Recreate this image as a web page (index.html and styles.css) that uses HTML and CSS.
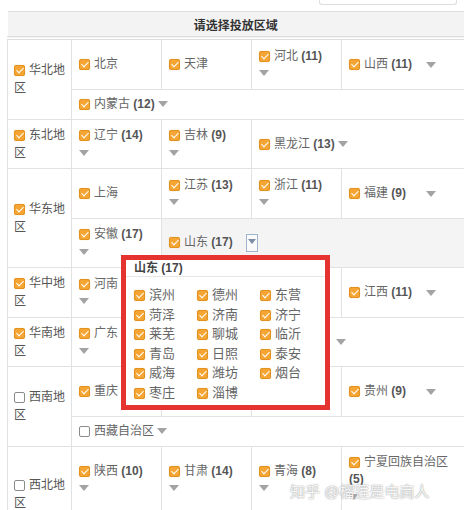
FILE: index.html
```html
<!DOCTYPE html>
<html lang="zh-CN">
<head>
    <meta charset="UTF-8">
    <meta name="viewport" content="width=device-width, initial-scale=1.0">
    <title>请选择投放区域</title>
    <link rel="stylesheet" href="styles.css">
</head>
<body>
    <div class="page">
        <div class="topbar"><div class="search-box"></div></div>

        <table class="area-table">
            <colgroup>
                <col class="col-region">
                <col class="col-prov">
                <col class="col-prov">
                <col class="col-prov">
                <col>
            </colgroup>
            <thead>
                <tr><th colspan="5">请选择投放区域</th></tr>
            </thead>
            <tbody>
                <!-- 华北 -->
                <tr>
                    <td class="region" rowspan="2"><i class="cb on"></i>华北地区</td>
                    <td><span class="prov"><i class="cb on"></i>北京</span></td>
                    <td><span class="prov"><i class="cb on"></i>天津</span></td>
                    <td><span class="prov"><i class="cb on"></i>河北 <b>(11)</b></span> <i class="arrow"></i></td>
                    <td><span class="prov"><i class="cb on"></i>山西 <b>(11)</b></span> <i class="arrow"></i></td>
                </tr>
                <tr class="short">
                    <td colspan="4"><span class="prov"><i class="cb on"></i>内蒙古 <b>(12)</b></span> <i class="arrow"></i></td>
                </tr>

                <!-- 东北 -->
                <tr>
                    <td class="region"><i class="cb on"></i>东北地区</td>
                    <td><span class="prov"><i class="cb on"></i>辽宁 <b>(14)</b></span> <i class="arrow"></i></td>
                    <td><span class="prov"><i class="cb on"></i>吉林 <b>(9)</b></span> <i class="arrow"></i></td>
                    <td colspan="2"><span class="prov"><i class="cb on"></i>黑龙江 <b>(13)</b></span> <i class="arrow"></i></td>
                </tr>

                <!-- 华东 -->
                <tr>
                    <td class="region" rowspan="2"><i class="cb on"></i>华东地区</td>
                    <td><span class="prov"><i class="cb on"></i>上海</span></td>
                    <td><span class="prov"><i class="cb on"></i>江苏 <b>(13)</b></span> <i class="arrow"></i></td>
                    <td><span class="prov"><i class="cb on"></i>浙江 <b>(11)</b></span> <i class="arrow"></i></td>
                    <td><span class="prov"><i class="cb on"></i>福建 <b>(9)</b></span> <i class="arrow"></i></td>
                </tr>
                <tr>
                    <td><span class="prov"><i class="cb on"></i>安徽 <b>(17)</b></span> <i class="arrow"></i></td>
                    <td colspan="3" class="active"><span class="prov"><i class="cb on"></i>山东 <b>(17)</b></span> <span class="drop-btn"><i class="arrow"></i></span></td>
                </tr>

                <!-- 华中 -->
                <tr>
                    <td class="region"><i class="cb on"></i>华中地区</td>
                    <td><span class="prov"><i class="cb on"></i>河南 <b>(17)</b></span> <i class="arrow"></i></td>
                    <td><span class="prov"><i class="cb on"></i>湖北 <b>(16)</b></span> <i class="arrow"></i></td>
                    <td><span class="prov"><i class="cb on"></i>湖南 <b>(14)</b></span> <i class="arrow"></i></td>
                    <td><span class="prov"><i class="cb on"></i>江西 <b>(11)</b></span> <i class="arrow"></i></td>
                </tr>

                <!-- 华南 -->
                <tr>
                    <td class="region"><i class="cb on"></i>华南地区</td>
                    <td><span class="prov"><i class="cb on"></i>广东 <b>(21)</b></span> <i class="arrow"></i></td>
                    <td><span class="prov"><i class="cb on"></i>广西 <b>(14)</b></span> <i class="arrow"></i></td>
                    <td colspan="2"><span class="prov"><i class="cb on"></i>海南 <b>(4)</b></span> <i class="arrow"></i></td>
                </tr>

                <!-- 西南 -->
                <tr>
                    <td class="region" rowspan="2"><i class="cb"></i>西南地区</td>
                    <td><span class="prov"><i class="cb on"></i>重庆</span></td>
                    <td><span class="prov"><i class="cb on"></i>四川 <b>(21)</b></span> <i class="arrow"></i></td>
                    <td><span class="prov"><i class="cb on"></i>云南 <b>(16)</b></span> <i class="arrow"></i></td>
                    <td><span class="prov"><i class="cb on"></i>贵州 <b>(9)</b></span> <i class="arrow"></i></td>
                </tr>
                <tr class="short">
                    <td colspan="4"><span class="prov"><i class="cb"></i>西藏自治区</span> <i class="arrow"></i></td>
                </tr>

                <!-- 西北 -->
                <tr>
                    <td class="region" rowspan="2"><i class="cb"></i>西北地区</td>
                    <td><span class="prov"><i class="cb on"></i>陕西 <b>(10)</b></span> <i class="arrow"></i></td>
                    <td><span class="prov"><i class="cb on"></i>甘肃 <b>(14)</b></span> <i class="arrow"></i></td>
                    <td><span class="prov"><i class="cb on"></i>青海 <b>(8)</b></span> <i class="arrow"></i></td>
                    <td><span class="prov"><i class="cb on"></i>宁夏回族自治区 <b>(5)</b></span> <i class="arrow"></i></td>
                </tr>
                <tr class="short">
                    <td colspan="4"><span class="prov"><i class="cb"></i>新疆维吾尔自治区 <b>(14)</b></span> <i class="arrow"></i></td>
                </tr>
            </tbody>
        </table>

        <!-- 山东 城市下拉 -->
        <div class="city-pop">
            <div class="city-pop-title">山东 (17)</div>
            <div class="city-list">
                <span class="city"><i class="cb on"></i>滨州</span>
                <span class="city"><i class="cb on"></i>德州</span>
                <span class="city"><i class="cb on"></i>东营</span>
                <span class="city"><i class="cb on"></i>菏泽</span>
                <span class="city"><i class="cb on"></i>济南</span>
                <span class="city"><i class="cb on"></i>济宁</span>
                <span class="city"><i class="cb on"></i>莱芜</span>
                <span class="city"><i class="cb on"></i>聊城</span>
                <span class="city"><i class="cb on"></i>临沂</span>
                <span class="city"><i class="cb on"></i>青岛</span>
                <span class="city"><i class="cb on"></i>日照</span>
                <span class="city"><i class="cb on"></i>泰安</span>
                <span class="city"><i class="cb on"></i>威海</span>
                <span class="city"><i class="cb on"></i>潍坊</span>
                <span class="city"><i class="cb on"></i>烟台</span>
                <span class="city"><i class="cb on"></i>枣庄</span>
                <span class="city"><i class="cb on"></i>淄博</span>
            </div>
        </div>

        <div class="watermark">知乎 @榴莲是电商人</div>
    </div>
</body>
</html>
```

FILE: styles.css
```css
body {
    margin: 0;
    overflow: hidden;
    background-color: #fff;
    font-family: "Liberation Sans", "Noto Sans CJK SC", sans-serif;
    font-size: 12px;
    color: #666;
}
.page {
    position: relative;
    height: 510px;
}
.topbar {
    height: 11px;
    display: flex;
    justify-content: flex-end;
}
.search-box {
    width: 136px;
    height: 4px;
    margin-right: 7px;
    border: 1px solid #ddd;
    border-top: none;
    border-radius: 0 0 3px 3px;
}
.area-table {
    margin-left: 7px;
    width: 457px;
    table-layout: fixed;
    border-collapse: collapse;
}
.col-region {
    width: 64px;
}
.col-prov {
    width: 90px;
}
.area-table th {
    height: 24px;
    padding: 0;
    background-color: #f3f3f3;
    border-top: 1px solid #ddd;
    border-bottom: 4px double #ddd;
    color: #333;
    font-weight: bold;
    text-align: center;
}
.area-table td {
    border: 1px solid #e2e2e2;
    border-right: none;
    padding: 7.5px 6px 7px 7px;
    line-height: 17px;
    vertical-align: middle;
}
.area-table td + td {
    border-left: 1px solid #e2e2e2;
}
.area-table tr.short td {
    padding-top: 6px;
    padding-bottom: 6px;
}
.area-table td.region {
    padding: 4px 4px 4px 6px;
    line-height: 18px;
    color: #555;
}
.area-table td.active {
    background-color: #f4f4f4;
}
.prov {
    display: inline-block;
    min-width: 74px;
}
.prov b {
    color: #555;
}
.cb {
    display: inline-block;
    position: relative;
    width: 11px;
    height: 11px;
    box-sizing: border-box;
    margin-right: 4px;
    border: 1px solid #8a8a8a;
    border-radius: 2px;
    background-color: #fff;
    vertical-align: -2px;
}
.cb.on {
    background-color: #f4a533;
    border-color: #e3921f;
    box-shadow: 0 0 1px rgba(240, 160, 50, 0.6);
}
.cb.on::after {
    content: "";
    position: absolute;
    left: 3px;
    top: 0px;
    width: 3px;
    height: 6px;
    border: solid #fff;
    border-width: 0 1.5px 1.5px 0;
    transform: rotate(45deg);
}
.arrow {
    display: inline-block;
    width: 0;
    height: 0;
    border-left: 5px solid transparent;
    border-right: 5px solid transparent;
    border-top: 6px solid #a3a3a3;
    vertical-align: middle;
}
.drop-btn {
    display: inline-block;
    width: 12px;
    height: 18px;
    box-sizing: border-box;
    border: 1px solid #9fb4cf;
    background-color: #fafafa;
    vertical-align: middle;
    text-align: center;
    line-height: 12px;
}
.drop-btn .arrow {
    border-left-width: 4px;
    border-right-width: 4px;
    border-top-width: 5px;
    border-top-color: #7d8da3;
}
.city-pop {
    position: absolute;
    left: 121px;
    top: 255px;
    width: 209px;
    height: 155px;
    box-sizing: border-box;
    border: 5px solid #e53330;
    background-color: #fff;
}
.city-pop-title {
    height: 16px;
    padding: 0 8px;
    line-height: 16px;
    border-bottom: 1px solid #e6e6e6;
    font-weight: bold;
    color: #444;
}
.city-list {
    display: grid;
    grid-template-columns: repeat(3, 63px);
    grid-auto-rows: 19.6px;
    padding: 8px 0 0 8px;
    color: #666;
    font-size: 13px;
}
.city {
    line-height: 19.6px;
    white-space: nowrap;
}
.watermark {
    position: absolute;
    left: 290px;
    top: 480px;
    font-size: 15px;
    color: rgba(255, 255, 255, 0.92);
    text-shadow: 0 0 1px #999, 0 0 2px #bbb;
}
```
